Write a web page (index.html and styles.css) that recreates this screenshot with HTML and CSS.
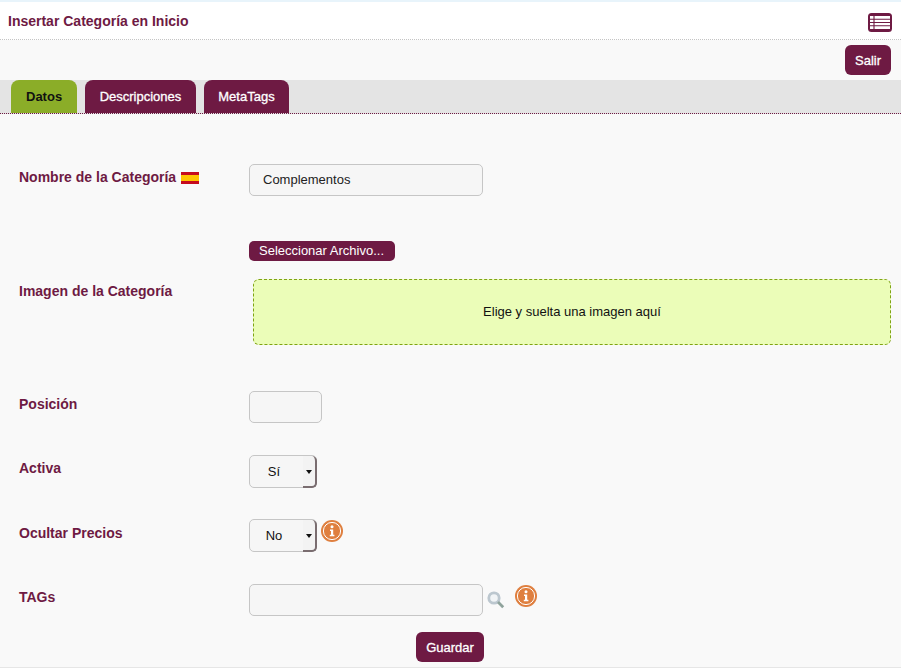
FILE: index.html
```html
<!DOCTYPE html>
<html lang="es">
<head>
<meta charset="utf-8">
<title>Insertar Categoría en Inicio</title>
<link rel="stylesheet" href="styles.css">
</head>
<body>
<header class="head">
  <h1 class="title">Insertar Categoría en Inicio</h1>
  <a class="list-icon" aria-label="Listado">
    <svg width="24" height="19" viewBox="0 0 24 19">
      <rect width="24" height="19" rx="3.500" fill="#6e1a43"/>
      <rect x="2" y="3" width="20" height="13" fill="#fff"/>
      <path d="M2 6.300h20M2 9.500h20M2 12.800h20M6 3v13" stroke="#6e1a43" stroke-width="1.100" fill="none"/>
    </svg>
  </a>
</header>
<div class="toolbar"><button class="btn">Salir</button></div>
<nav class="tabs">
  <a class="tab tab-active">Datos</a>
  <a class="tab">Descripciones</a>
  <a class="tab">MetaTags</a>
</nav>
<main class="form">
  <div class="row row-name">
    <label class="label">Nombre de la Categoría
      <svg class="flag" width="18" height="12" viewBox="0 0 18 12"><rect width="18" height="12" fill="#c60b1e"/><rect y="3" width="18" height="6" fill="#ffc400"/></svg>
    </label>
    <input class="field field-wide" value="Complementos">
  </div>
  <div class="row row-image">
    <label class="label label-image">Imagen de la Categoría</label>
    <div class="image-col">
      <button class="file-btn">Seleccionar Archivo...</button>
      <div class="drop">Elige y suelta una imagen aquí</div>
    </div>
  </div>
  <div class="row row-pos">
    <label class="label">Posición</label>
    <input class="field field-small">
  </div>
  <div class="row row-active">
    <label class="label">Activa</label>
    <div class="select"><span class="select-text">Sí</span><span class="select-arrow"></span></div>
  </div>
  <div class="row row-hide">
    <label class="label">Ocultar Precios</label>
    <div class="control-line">
      <div class="select"><span class="select-text">No</span><span class="select-arrow"></span></div>
      <svg class="info info-hide" width="22" height="22" viewBox="0 0 22 22"><circle cx="11" cy="11" r="11" fill="#df7f3f"/><circle cx="11" cy="11" r="8.600" fill="none" stroke="#fff" stroke-width="1"/><circle cx="11" cy="6.800" r="1.500" fill="#fff"/><path d="M9 9.500h3.200v5.300h1.200v1.400H8.800v-1.400h1.200v-3.900H9z" fill="#fff"/></svg>
    </div>
  </div>
  <div class="row row-tags">
    <label class="label">TAGs</label>
    <div class="control-line">
      <input class="field field-wide">
      <svg class="search" width="18" height="18" viewBox="0 0 18 18"><circle cx="7" cy="7" r="5.200" fill="#f1f4f6" stroke="#bcc7cf" stroke-width="2.800"/><path d="M11 11l5.200 5.200" stroke="#8fa39c" stroke-width="2.800"/></svg>
      <svg class="info info-tags" width="22" height="22" viewBox="0 0 22 22"><circle cx="11" cy="11" r="11" fill="#df7f3f"/><circle cx="11" cy="11" r="8.600" fill="none" stroke="#fff" stroke-width="1"/><circle cx="11" cy="6.800" r="1.500" fill="#fff"/><path d="M9 9.500h3.200v5.300h1.200v1.400H8.800v-1.400h1.200v-3.900H9z" fill="#fff"/></svg>
    </div>
  </div>
  <div class="actions"><button class="btn">Guardar</button></div>
</main>
</body>
</html>
```

FILE: styles.css
```css
* { box-sizing: border-box; }
html, body { margin: 0; padding: 0; }
body {
  width: 901px;
  height: 668px;
  overflow: hidden;
  background: #f9f9f9;
  font-family: "Liberation Sans", Arial, sans-serif;
  font-size: 13px;
  color: #111;
  border-bottom: 1px solid #e6e6e6;
}
.head {
  height: 40px;
  background: #fff;
  border-top: 2px solid #e8f4fb;
  border-bottom: 1px dotted #c4c4c4;
  display: flex;
  align-items: center;
  justify-content: space-between;
  padding: 0 9px 0 8px;
}
.title {
  margin: 1px 0 0;
  font-size: 14px;
  font-weight: bold;
  color: #6e1a43;
}
.list-icon { display: flex; margin-top: 3px; }
.toolbar {
  height: 40px;
  display: flex;
  justify-content: flex-end;
  align-items: flex-start;
  padding: 5px 10px 0 0;
}
.btn {
  height: 30px;
  padding: 0 10px;
  border: 0;
  border-radius: 6px;
  background: #6e1a43;
  color: #fff;
  font: 13px "Liberation Sans", Arial, sans-serif;
  -webkit-text-stroke: 0.3px #fff;
}
.tabs {
  height: 34px;
  background: #e4e4e4;
  border-bottom: 1px dotted #6e1a43;
  display: flex;
  gap: 8px;
  padding-left: 11px;
}
.tab {
  height: 33px;
  padding: 0 14.500px;
  border-radius: 8px 8px 0 0;
  background: #6e1a43;
  color: #fff;
  font-size: 13px;
  line-height: 33px;
  -webkit-text-stroke: 0.3px #fff;
}
.tab-active {
  padding: 0 15px;
  background: #8bad28;
  color: #111;
  font-weight: bold;
  -webkit-text-stroke: 0;
}
.form { padding-left: 19px; padding-right: 10px; }
.row {
  display: grid;
  grid-template-columns: 230px 1fr;
  align-items: start;
}
.label {
  font-size: 14px;
  font-weight: bold;
  color: #6e1a43;
  line-height: 16px;
}
.flag { vertical-align: -2px; margin-left: 1px; }
.field {
  height: 32px;
  border: 1px solid #c6c6c6;
  border-radius: 5px;
  background: #f6f6f6;
  padding: 0 13px 2px;
  font: 13px "Liberation Sans", Arial, sans-serif;
  color: #222;
  display: block;
}
.field-wide { width: 234px; }
.field-small { width: 73px; }
.row-name { margin-top: 50px; }
.row-name .label { padding-top: 5px; }
.row-image { margin-top: 45px; }
.label-image { padding-top: 42px; }
.image-col { display: flex; flex-direction: column; align-items: flex-start; }
.file-btn {
  height: 20px;
  width: 146px;
  padding: 0 1px 2px 0;
  border: 0;
  border-radius: 5px;
  background: #6e1a43;
  color: #fff;
  font: 13px "Liberation Sans", Arial, sans-serif;
}
.drop {
  margin: 18px 0 0 4px;
  width: 638px;
  height: 66px;
  border: 1px dashed #7fa314;
  border-radius: 6px;
  background: #ebfdb8;
  display: flex;
  align-items: center;
  justify-content: center;
  padding-bottom: 2px;
  color: #111;
}
.row-pos { margin-top: 46px; }
.row-pos .label { padding-top: 5px; }
.row-active { margin-top: 32px; }
.row-active .label { padding-top: 5px; }
.row-hide { margin-top: 31px; }
.row-hide .label { padding-top: 6px; }
.row-tags { margin-top: 32px; }
.row-tags .label { padding-top: 5px; }
.select {
  position: relative;
  width: 68px;
  height: 33px;
  border: 1px solid #c6c6c6;
  border-radius: 5px;
  background: #f6f6f6;
  display: flex;
  align-items: center;
  justify-content: center;
  padding-right: 18px;
}
.select-arrow {
  position: absolute;
  right: -1px;
  top: 0;
  bottom: -1px;
  width: 14px;
  background: #f3f3f3;
  border-right: 2px solid #7a6d70;
  border-bottom: 2px solid #7a6d70;
  border-radius: 0 5px 5px 0;
}
.select-arrow::after {
  content: "";
  position: absolute;
  left: 3px;
  top: 14px;
  border-left: 3px solid transparent;
  border-right: 3px solid transparent;
  border-top: 4px solid #111;
}
.control-line { display: flex; align-items: flex-start; }
.info-hide { margin-left: 4px; margin-top: 1px; }
.search { margin: 7px 0 0 4px; }
.info-tags { margin-left: 10px; margin-top: 1px; }
.actions { display: flex; justify-content: center; margin-top: 16px; padding-right: 10px; }
```
